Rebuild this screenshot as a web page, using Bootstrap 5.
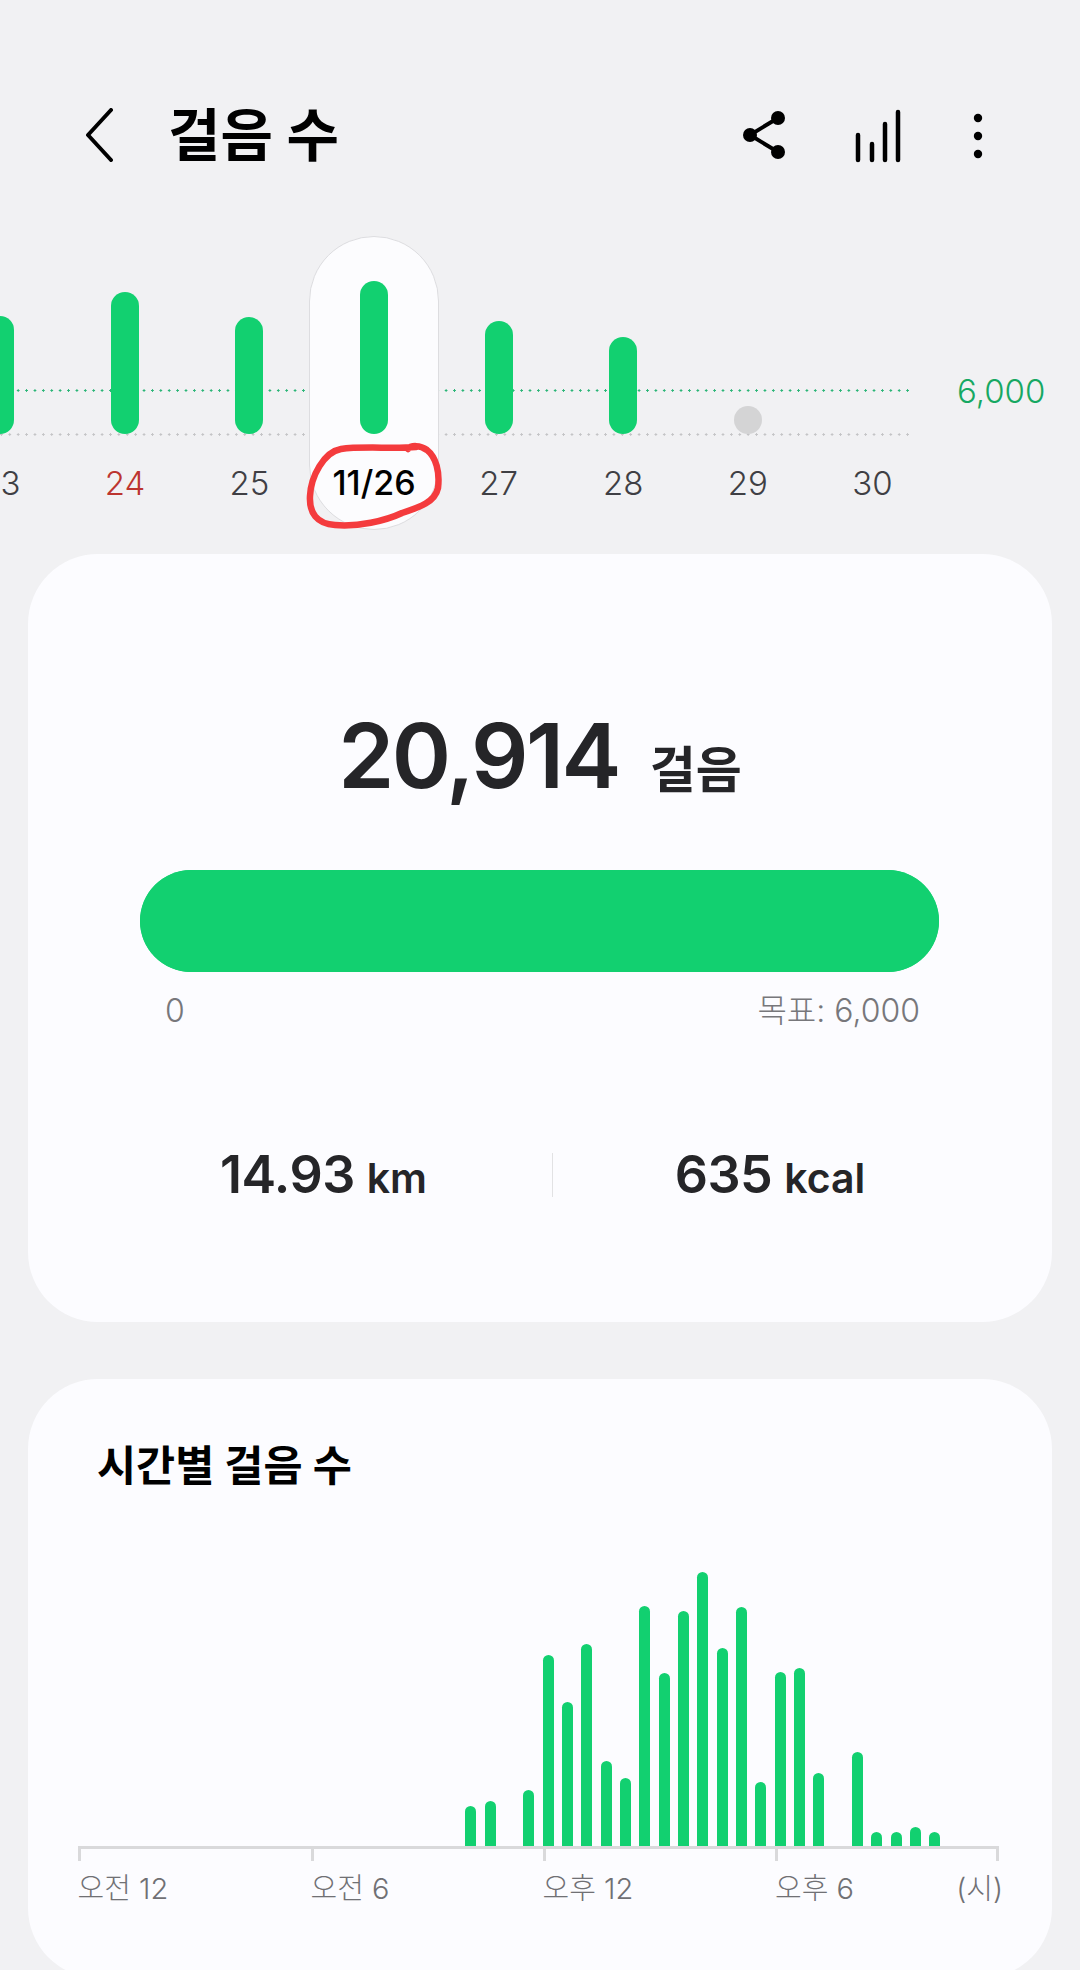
<!doctype html>
<html lang="ko">
<head>
<meta charset="utf-8">
<title>걸음 수</title>
<link href="https://cdn.jsdelivr.net/npm/bootstrap@5.3.0/dist/css/bootstrap.min.css" rel="stylesheet">
<style>
html,body{height:1970px;overflow:hidden}
body{background:#f1f1f3;font-family:Inter,"Noto Sans CJK KR",sans-serif;color:#252528}
.app-head{height:68px;margin-top:100px;padding-left:86px;padding-right:83px}
.app-title{font-size:57px;font-weight:700;line-height:68px;color:#000;margin:4px 0 0 54px}
.head-tools svg{margin-top:10px}
.back-icon{margin-top:2px}
.strip{position:relative;height:294px;margin-top:68px;margin-bottom:24px;overflow:visible}
.dotline{position:absolute;left:0;width:914px;height:3px;background-size:8.4px 3px;background-repeat:repeat-x}
.dotline-goal{top:153px;background-image:radial-gradient(circle 1.3px at 1.5px 1.5px,#2bb577 99%,transparent)}
.dotline-base{top:197px;background-image:radial-gradient(circle 1.3px at 1.5px 1.5px,#c4c4c6 99%,transparent)}
.goal-tag{position:absolute;left:957px;top:135px;font-size:33px;font-weight:300;line-height:40px;color:#16a862}
.day-row{margin-left:-62px}
.day-col{position:relative;width:124.6px;flex:none}
.day-plot{position:relative;height:198px}
.day-bar{width:28px;border-radius:14px;background:#12d070}
.day-bar-idle{background:#d4d4d5}
.day-num{position:relative;margin-top:29px;font-size:33px;font-weight:300;line-height:40px;color:#3f3f44;text-align:center}
.day-sun{color:#bc3530}
.day-now{color:#000;font-size:34px;font-weight:500}
.day-pill{position:absolute;left:-3px;top:0;width:130.5px;height:294px;border-radius:65px;background:#fcfcfe;border:1px solid #dddde0}
.loop{position:absolute;left:0;top:0;width:1080px;height:294px;overflow:visible;pointer-events:none}
.sheet{background:#fcfcff;border:0;border-radius:70px;margin-left:28px;margin-right:28px}
.sheet-main{height:768px;margin-bottom:57px}
.sheet-hours{height:599px}
.count-row{margin-top:152px;height:100px;gap:31px;padding-left:0}
.count-num{font-size:90px;font-weight:600;line-height:100px;letter-spacing:-2.6px}
.count-unit{font-size:50px;font-weight:700;line-height:100px}
.goal-bar{height:102px;margin:64px 113px 0 112px;border-radius:51px;background:#12d070}
.goal-bar .progress-bar{background:#12d070}
.goal-scale{margin:20px 132px 0 137px;font-size:32px;font-weight:300;line-height:38px;color:#77777b}
.stat-row{margin:123px 65px 0 67px}
.stat-cell{flex:1 1 0;height:44px;font-weight:600;line-height:44px;text-align:center}
.stat-wide{flex:0 0 457px}
.stat-cell+.stat-cell{border-left:1px solid #e2e2e4}
.stat-num{font-size:52px;letter-spacing:-.5px}
.stat-unit{font-size:41px;margin-left:12px}
.hours-title{margin:56px 0 0 69px;font-size:42.5px;font-weight:700;line-height:62px;color:#000}
.hour-chart{height:281px;margin-top:68px;padding-left:433px}
.hour-slot{width:19.35px;flex:none;display:flex;justify-content:center;align-items:flex-end}
.hour-bar{width:11px;background:#12d070;border-radius:5.5px 5.5px 0 0}
.hour-axis{margin-left:49.5px;display:grid;grid-template-columns:233px 232px 232.6px 224px}
.axis-cell{height:15px;border-top:3px solid #d9d9db;border-left:3px solid #d9d9db;margin-bottom:9px}
.axis-end{border-right:3px solid #d9d9db}
.axis-label{font-size:29px;font-weight:300;line-height:38px;color:#707074;white-space:nowrap}
.axis-tail{margin-right:-4px}
</style>
</head>
<body>
<header class="app-head d-flex align-items-center">
  <svg class="back-icon" width="28" height="54" viewBox="0 0 28 54" fill="none" stroke="#000" stroke-width="4" stroke-linecap="round" stroke-linejoin="round" aria-hidden="true"><path d="M25 2 2 27l23 25"/></svg>
  <h1 class="app-title">걸음 수</h1>
  <div class="head-tools d-flex align-items-center ms-auto">
    <svg width="260" height="60" viewBox="0 0 260 60" aria-hidden="true">
      <g fill="#000"><circle cx="41" cy="9" r="7"/><circle cx="13" cy="26" r="7"/><circle cx="41" cy="43" r="7"/></g>
      <path d="M41 9 13 26l28 17" fill="none" stroke="#000" stroke-width="4"/>
      <g stroke="#000" stroke-width="4.5" stroke-linecap="round"><path d="M121 26v25M135 35v16M148 15v36M161 3v48"/></g>
      <g fill="#000"><circle cx="241" cy="9" r="4.2"/><circle cx="241" cy="27" r="4.2"/><circle cx="241" cy="45" r="4.2"/></g>
    </svg>
  </div>
</header>

<section class="strip">
  <div class="dotline dotline-goal"></div>
  <div class="dotline dotline-base"></div>
  <div class="d-flex day-row">
    <div class="day-col"><div class="day-plot d-flex justify-content-center align-items-end"><div class="day-bar" style="height:118px"></div></div><div class="day-num">23</div></div>
    <div class="day-col"><div class="day-plot d-flex justify-content-center align-items-end"><div class="day-bar" style="height:142px"></div></div><div class="day-num day-sun">24</div></div>
    <div class="day-col"><div class="day-plot d-flex justify-content-center align-items-end"><div class="day-bar" style="height:117px"></div></div><div class="day-num">25</div></div>
    <div class="day-col"><div class="day-pill"></div><div class="day-plot d-flex justify-content-center align-items-end"><div class="day-bar" style="height:153px"></div></div><div class="day-num day-now">11/26</div></div>
    <div class="day-col"><div class="day-plot d-flex justify-content-center align-items-end"><div class="day-bar" style="height:113px"></div></div><div class="day-num">27</div></div>
    <div class="day-col"><div class="day-plot d-flex justify-content-center align-items-end"><div class="day-bar" style="height:97px"></div></div><div class="day-num">28</div></div>
    <div class="day-col"><div class="day-plot d-flex justify-content-center align-items-end"><div class="day-bar day-bar-idle" style="height:28px"></div></div><div class="day-num">29</div></div>
    <div class="day-col"><div class="day-plot"></div><div class="day-num">30</div></div>
  </div>
  <div class="goal-tag">6,000</div>
  <svg class="loop" viewBox="0 236 1080 294" fill="none" aria-hidden="true"><path d="M416 447C395 449 360 446 341 449 324 452 311 476 310 496 309 513 317 524 335 525 358 527 385 521 402 513 420 507 435 502 438 488 440 472 436 457 427 450 420 445 411 445 408 449" stroke="#f43b3d" stroke-width="6.5" stroke-linecap="round" stroke-linejoin="round"/></svg>
</section>

<main>
  <div class="card sheet sheet-main">
    <div class="count-row d-flex justify-content-center align-items-baseline">
      <span class="count-num">20,914</span><span class="count-unit">걸음</span>
    </div>
    <div class="progress goal-bar"><div class="progress-bar w-100"></div></div>
    <div class="goal-scale d-flex justify-content-between"><span>0</span><span>목표: 6,000</span></div>
    <div class="stat-row d-flex align-items-center">
      <div class="stat-cell stat-wide"><span class="stat-num">14.93</span><span class="stat-unit">km</span></div>
      <div class="stat-cell"><span class="stat-num">635</span><span class="stat-unit">kcal</span></div>
    </div>
  </div>

  <div class="card sheet sheet-hours">
    <h2 class="hours-title">시간별 걸음 수</h2>
    <div class="hour-chart d-flex align-items-end">
      <div class="hour-slot"><div class="hour-bar" style="height:40px"></div></div>
      <div class="hour-slot"><div class="hour-bar" style="height:45px"></div></div>
      <div class="hour-slot"></div>
      <div class="hour-slot"><div class="hour-bar" style="height:56px"></div></div>
      <div class="hour-slot"><div class="hour-bar" style="height:191px"></div></div>
      <div class="hour-slot"><div class="hour-bar" style="height:144px"></div></div>
      <div class="hour-slot"><div class="hour-bar" style="height:202px"></div></div>
      <div class="hour-slot"><div class="hour-bar" style="height:85px"></div></div>
      <div class="hour-slot"><div class="hour-bar" style="height:68px"></div></div>
      <div class="hour-slot"><div class="hour-bar" style="height:240px"></div></div>
      <div class="hour-slot"><div class="hour-bar" style="height:173px"></div></div>
      <div class="hour-slot"><div class="hour-bar" style="height:235px"></div></div>
      <div class="hour-slot"><div class="hour-bar" style="height:274px"></div></div>
      <div class="hour-slot"><div class="hour-bar" style="height:198px"></div></div>
      <div class="hour-slot"><div class="hour-bar" style="height:239px"></div></div>
      <div class="hour-slot"><div class="hour-bar" style="height:64px"></div></div>
      <div class="hour-slot"><div class="hour-bar" style="height:174px"></div></div>
      <div class="hour-slot"><div class="hour-bar" style="height:178px"></div></div>
      <div class="hour-slot"><div class="hour-bar" style="height:73px"></div></div>
      <div class="hour-slot"></div>
      <div class="hour-slot"><div class="hour-bar" style="height:94px"></div></div>
      <div class="hour-slot"><div class="hour-bar" style="height:14px"></div></div>
      <div class="hour-slot"><div class="hour-bar" style="height:14px"></div></div>
      <div class="hour-slot"><div class="hour-bar" style="height:19px"></div></div>
      <div class="hour-slot"><div class="hour-bar" style="height:14px"></div></div>
    </div>
    <div class="hour-axis">
      <div class="axis-cell"></div><div class="axis-cell"></div><div class="axis-cell"></div><div class="axis-cell axis-end"></div>
      <div class="axis-label">오전 12</div><div class="axis-label">오전 6</div><div class="axis-label">오후 12</div>
      <div class="axis-label axis-tail d-flex justify-content-between"><span>오후 6</span><span>(시)</span></div>
    </div>
  </div>
</main>
<script src="https://cdn.jsdelivr.net/npm/bootstrap@5.3.0/dist/js/bootstrap.bundle.min.js"></script>
</body>
</html>
